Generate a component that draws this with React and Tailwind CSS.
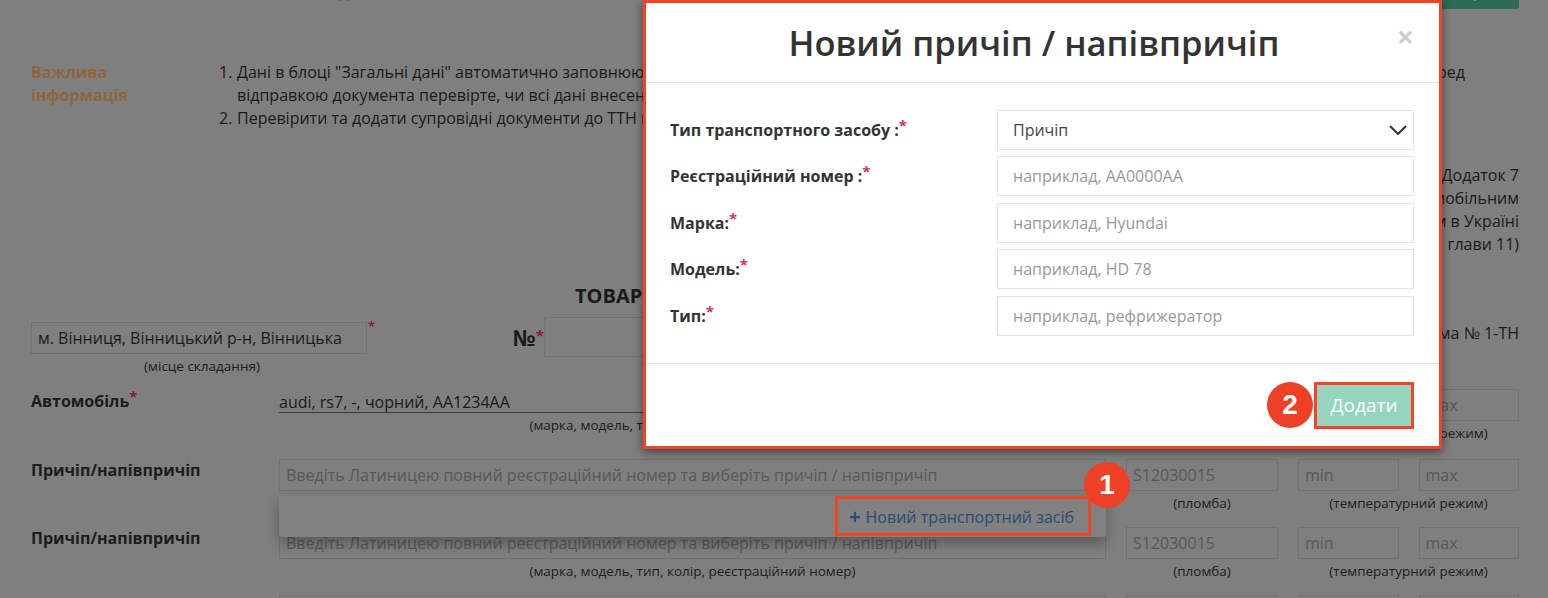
import React from 'react';
import { FaPlus } from 'react-icons/fa';

const Star = () => <sup className="text-[#8a1f2c] text-[15px] font-bold leading-none top-[-5px] relative align-baseline">*</sup>;

const ModalStar = () => <sup className="text-[#d9334a] text-[15px] font-bold leading-none top-[-5px] relative align-baseline">*</sup>;

const Caption = ({ children }) => (
  <div className="mt-[4px] text-center text-[13.5px] leading-[17px] text-[#1c1c1c]">{children}</div>
);

const fieldClass = 'block w-full h-[32px] px-[6px] border border-[#717171] bg-transparent text-[16px] outline-none placeholder:text-[#585858]';

const TransportRow = ({ label, required, filled, className }) => (
  <div className={`flex items-start ${className}`}>
    <div className={`w-[248px] shrink-0 text-[16px] leading-[23px] font-bold text-[#1c1c1c] ${filled ? 'pt-[1px]' : ''}`}>
      {label}{required && <Star />}
    </div>
    <div className="w-[827px] shrink-0">
      {filled ? (
        <div className="h-[24px] mb-[1px] border-b border-[#3c3c3c] text-[16px] leading-[26px] text-[#1a1a1a]">{filled}</div>
      ) : (
        <input className={fieldClass} placeholder="Введіть Латиницею повний реєстраційний номер та виберіть причіп / напівпричіп" />
      )}
      <Caption>(марка, модель, тип, колір, реєстраційний номер)</Caption>
    </div>
    <div className="w-[152px] shrink-0 ml-[20px]">
      <input className={fieldClass} placeholder="S12030015" />
      <Caption>(пломба)</Caption>
    </div>
    <div className="w-[221px] shrink-0 ml-[20px]">
      <div className="flex gap-[20px]">
        <input className={fieldClass} placeholder="min" />
        <input className={fieldClass} placeholder="max" />
      </div>
      <Caption>(температурний режим)</Caption>
    </div>
  </div>
);

const ModalField = ({ label, placeholder }) => (
  <div className="flex items-start">
    <div className="w-[327px] shrink-0 pt-[8px] text-[16px] leading-[24px] font-bold text-[#333]">
      {label}<ModalStar />
    </div>
    <input
      className="w-[417px] h-[40px] px-[15px] border border-[#e4e4e4] bg-white text-[16px] outline-none placeholder:text-[#999]"
      placeholder={placeholder}
    />
  </div>
);

const Badge = ({ children, className }) => (
  <div className={`absolute w-[46px] h-[46px] rounded-full bg-[#ee4026] text-white flex items-center justify-center text-[28px] font-bold font-['Liberation_Sans',sans-serif] ${className}`}>
    {children}
  </div>
);

export default function App() {
  return (
    <div className="relative h-[598px] overflow-hidden bg-[#7f7f7f] font-['Open_Sans',sans-serif] text-[16px] text-[#1a1a1a]">
      <div className="pl-[31px] pr-[29px]">
        <div className="flex justify-between h-[9px]">
          <span className="ml-[231px] -mt-[20px] text-[16px] leading-[23px] font-bold">Загальні дані</span>
          <button className="-mt-[21px] w-[79px] h-[30px] rounded-[3px] bg-[#2d6b57] text-[13px] text-[#b8c9c3]">Зберегти</button>
        </div>

        <div className="flex mt-[52px] leading-[23px]">
          <div className="w-[188px] shrink-0 text-[#8f663c] font-bold">Важлива<br />інформація</div>
          <ol className="flex-1">
            <li className="flex">
              <span className="w-[18px] shrink-0">1.</span>
              <div>
                <div className="w-[1228px] flex justify-between">
                  <span>Дані в блоці "Загальні дані" автоматично заповнюються на основі даних профілю компанії та замовлення.</span>
                  <span>Будь ласка, перед</span>
                </div>
                <div>відправкою документа перевірте, чи всі дані внесено правильно та за потреби відредагуйте.</div>
              </div>
            </li>
            <li className="flex">
              <span className="w-[18px] shrink-0">2.</span>
              <span>Перевірити та додати супровідні документи до ТТН на вкладці документів.</span>
            </li>
          </ol>
        </div>

        <div className="mt-[34px] text-right leading-[23px]">
          <div>Додаток 7</div>
          <div>до Правил перевезень вантажів автомобільним</div>
          <div>транспортом в Україні</div>
          <div>(пункт 11.1 глави 11)</div>
        </div>

        <h1 className="mt-[28px] pl-[544px] text-[20px] leading-[24px] font-bold">ТОВАРНО-ТРАНСПОРТНА НАКЛАДНА</h1>

        <div className="flex items-start mt-[9px] h-[72px]">
          <div className="w-[336px] shrink-0 mt-[5px]">
            <input className={`${fieldClass} text-[#1a1a1a]`} defaultValue="м. Вінниця, Вінницький р-н, Вінницька" />
            <div className="pl-[6px]"><Caption>(місце складання)</Caption></div>
          </div>
          <span className="ml-[1px] mt-[3px] text-[13px] leading-[13px] font-bold text-[#8a1f2c]">*</span>
          <div className="ml-[138px] flex items-start">
            <span className="mt-[8px] text-[22px] leading-[24px] font-bold">№<Star /></span>
            <input className="w-[200px] h-[40px] border border-[#717171] bg-transparent" />
          </div>
          <div className="ml-auto mt-[5px] leading-[23px]">Форма № 1-ТН</div>
        </div>

        <TransportRow label="Автомобіль" required filled="audi, rs7, -, чорний, AA1234AA" className="h-[70px]" />
        <TransportRow label="Причіп/напівпричіп" className="h-[68px]" />
        <TransportRow label="Причіп/напівпричіп" className="h-[68px]" />
        <TransportRow label="Причіп/напівпричіп" className="h-[68px]" />
      </div>

      {/* dropdown under the second row */}
      <div className="absolute left-[279px] top-[496px] w-[827px] h-[41px] rounded-[2px] bg-[#818181] shadow-[0_6px_14px_rgba(0,0,0,0.3)] flex items-center justify-end pr-[32px]">
        <span className="flex items-center gap-[5px] text-[16px] text-[#2c4c74]">
          <FaPlus className="w-[12px] h-[12px]" />
          Новий транспортний засіб
        </span>
      </div>

      {/* modal */}
      <div className="absolute left-[643px] top-0 w-[799px] h-[449px] border-[3px] border-[#f44327] bg-white shadow-[0_3px_9px_rgba(0,0,0,0.5)] flex flex-col">
        <div className="relative h-[80px] shrink-0 pt-[1px] pr-[17px] border-b border-[#e5e5e5] flex items-center justify-center">
          <h2 className="text-[34.6px] leading-[44px] font-semibold text-[#333]">Новий причіп / напівпричіп</h2>
          <span className="absolute right-[25px] top-[19px] text-[30px] leading-[30px] font-bold text-[#cfcfcf]">×</span>
        </div>
        <div className="h-[280px] shrink-0 pt-[26.9px] pl-[24px] flex flex-col gap-[6.5px]">
          <div className="flex items-start">
            <div className="w-[327px] shrink-0 pt-[8px] text-[16px] leading-[24px] font-bold text-[#333]">
              Тип транспортного засобу :<ModalStar />
            </div>
            <div className="w-[417px] h-[40px] px-[15px] border border-[#e4e4e4] flex items-center justify-between text-[#444]">
              Причіп
              <svg className="w-[18px] h-[10px] -mr-[9px]" viewBox="0 0 18 10" fill="none" stroke="#333" strokeWidth="2">
                <path d="M1 1l8 8 8-8" />
              </svg>
            </div>
          </div>
          <ModalField label="Реєстраційний номер :" placeholder="наприклад, AA0000AA" />
          <ModalField label="Марка:" placeholder="наприклад, Hyundai" />
          <ModalField label="Модель:" placeholder="наприклад, HD 78" />
          <ModalField label="Тип:" placeholder="наприклад, рефрижератор" />
        </div>
        <div className="flex-1 border-t border-[#e5e5e5] flex justify-end items-start pt-[18px] pr-[25px]">
          <button className="w-[100px] h-[47px] border-[3px] border-[#f44327] bg-[#95d5c0] text-white text-[19px]">Додати</button>
        </div>
      </div>

      {/* annotations */}
      <div className="absolute left-[835px] top-[496px] w-[256px] h-[40px] border-[3px] border-[#f04427]" />
      <Badge className="left-[1084px] top-[462px]">1</Badge>
      <Badge className="left-[1267px] top-[382px]">2</Badge>
    </div>
  );
}
